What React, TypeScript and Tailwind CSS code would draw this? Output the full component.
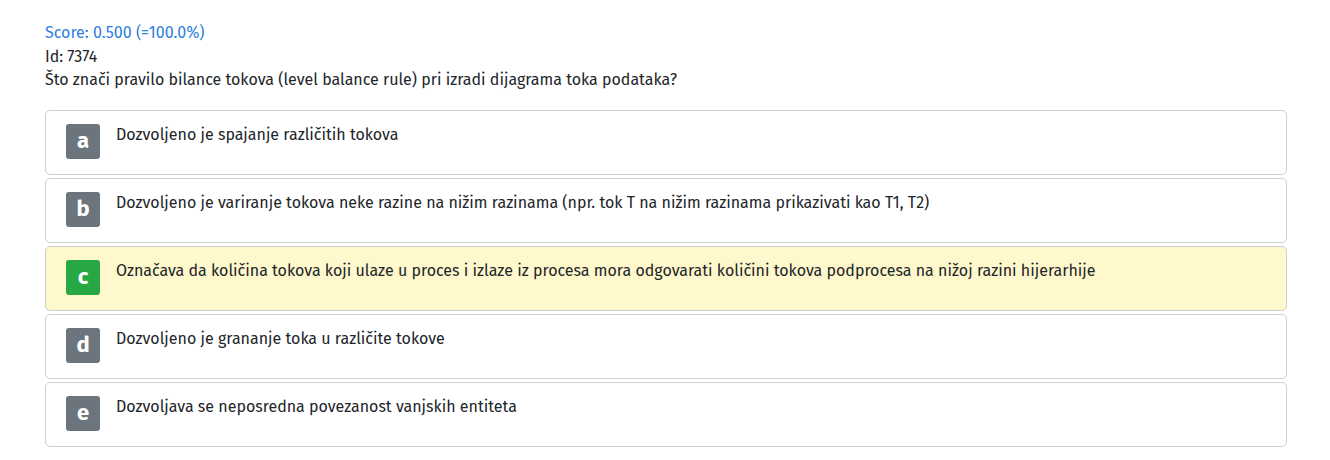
const answers = [
  { key: "a", text: "Dozvoljeno je spajanje različitih tokova", correct: false },
  {
    key: "b",
    text: "Dozvoljeno je variranje tokova neke razine na nižim razinama (npr. tok T na nižim razinama prikazivati kao T1, T2)",
    correct: false,
  },
  {
    key: "c",
    text: "Označava da količina tokova koji ulaze u proces i izlaze iz procesa mora odgovarati količini tokova podprocesa na nižoj razini hijerarhije",
    correct: true,
  },
  { key: "d", text: "Dozvoljeno je grananje toka u različite tokove", correct: false },
  { key: "e", text: "Dozvoljava se neposredna povezanost vanjskih entiteta", correct: false },
];

function Answer({ letter, text, correct }: { letter: string; text: string; correct: boolean }) {
  return (
    <div
      className={`flex items-start gap-4 h-[65px] px-5 pt-3 rounded-[5px] border border-[#cfcfcf] ${
        correct ? "bg-[#fff8cc]" : "bg-white"
      }`}
    >
      <div
        className={`mt-px w-[34px] h-[35px] shrink-0 rounded-[3px] flex items-center justify-center text-white text-[22px] font-bold leading-none pb-[2px] ${
          correct ? "bg-[#28a745]" : "bg-[#6c757d]"
        }`}
      >
        {letter}
      </div>
      <div className="text-[16px] leading-[24px] text-[#212529]">{text}</div>
    </div>
  );
}

export default function App() {
  return (
    <div className="bg-white min-h-[460px] px-[45px] pt-[21px] font-['Fira_Sans','Noto_Sans',sans-serif]">
      <div className="text-[16px] leading-[24px] text-[#2d7fe0]">Score: 0.500 (=100.0%)</div>
      <div className="text-[16px] leading-[23px] text-[#212529]">Id: 7374</div>
      <div className="text-[16px] leading-[24px] text-[#212529]">
        Što znači pravilo bilance tokova (level balance rule) pri izradi dijagrama toka podataka?
      </div>
      <div className="mt-[18px] w-[1242px] flex flex-col gap-[3px]">
        {answers.map((a) => (
          <Answer key={a.key} letter={a.key} text={a.text} correct={a.correct} />
        ))}
      </div>
    </div>
  );
}
